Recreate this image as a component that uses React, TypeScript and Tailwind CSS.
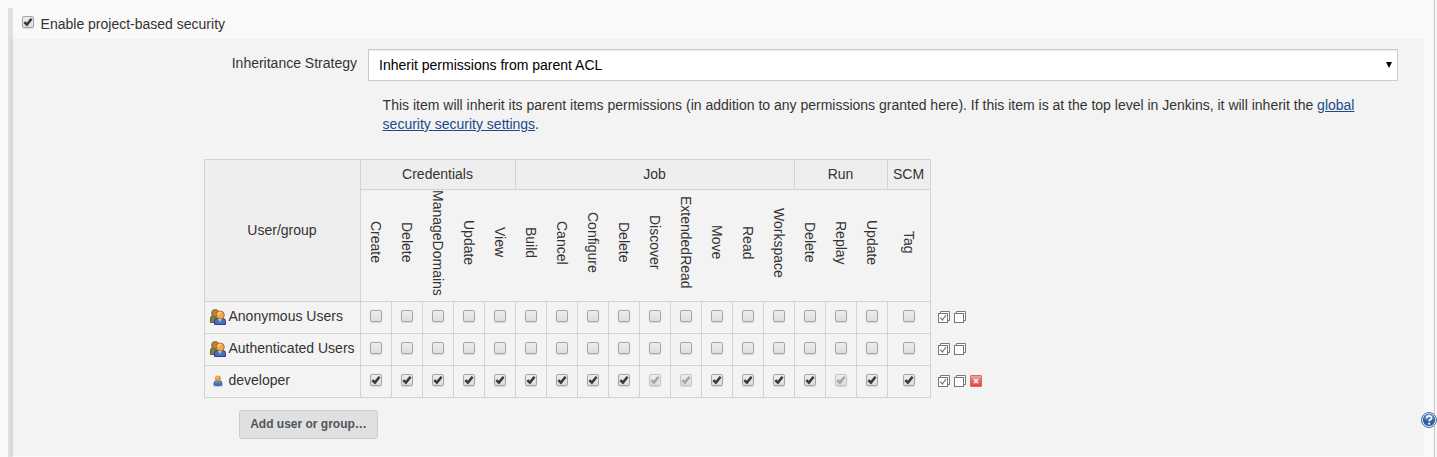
import React from "react";

type Group = { name: string; perms: string[]; span: string };

const groups: Group[] = [
  { name: "Credentials", perms: ["Create", "Delete", "ManageDomains", "Update", "View"], span: "col-span-5" },
  {
    name: "Job",
    perms: ["Build", "Cancel", "Configure", "Delete", "Discover", "ExtendedRead", "Move", "Read", "Workspace"],
    span: "col-span-9",
  },
  { name: "Run", perms: ["Delete", "Replay", "Update"], span: "col-span-3" },
  { name: "SCM", perms: ["Tag"], span: "col-span-1" },
];

const perms = groups.flatMap((g) => g.perms.map((p) => ({ group: g.name, name: p })));

const implied = ["Job/Discover", "Job/ExtendedRead", "Run/Replay"];

const users = [
  { name: "Anonymous Users", group: true, granted: false },
  { name: "Authenticated Users", group: true, granted: false },
  { name: "developer", group: false, granted: true },
];

function CheckBox({ checked = false, disabled = false }: { checked?: boolean; disabled?: boolean }) {
  return (
    <span
      role="checkbox"
      aria-checked={checked}
      aria-disabled={disabled}
      className={
        "block size-3 shrink-0 rounded-[2px] border bg-linear-to-b from-[#ededed] to-[#dedede] shadow-[0_1px_1px_rgba(0,0,0,0.12)] " +
        (disabled ? "border-[#c6c6c6]" : "border-[#a6a6a6]")
      }
    >
      {checked && (
        <svg viewBox="0 0 10 10" className="block size-2.5">
          <path
            d="M1.3 5.1 3.9 7.6 8.6 1.8"
            fill="none"
            stroke={disabled ? "#a4a4a4" : "#383838"}
            strokeWidth="2.5"
          />
        </svg>
      )}
    </span>
  );
}

function GroupIcon() {
  return (
    <svg viewBox="0 0 16 16" className="block size-4">
      <path d="M.5 13.5V9.2Q.5 6.5 4 6.5h3l2 2v5z" fill="#73853f" stroke="#3c4a24" strokeWidth=".8" />
      <circle cx="5.2" cy="4.1" r="3.6" fill="#bb8436" stroke="#80501d" strokeWidth=".8" />
      <path d="M4.5 15.5v-3.4q0-2.8 3.5-2.8h4q3.5 0 3.5 2.8v3.4z" fill="#3f72bd" stroke="#3b2b78" strokeWidth=".9" />
      <path d="m8 9.5 2 4 2-4z" fill="#dbe7f7" />
      <path d="m9.6 11 .4 3 .5-3z" fill="#4b6fb0" />
      <circle cx="10.3" cy="6" r="4" fill="#f2a850" stroke="#bd621b" strokeWidth=".9" />
      <path d="M7.8 5.4q1-2.3 3.2-1.8" fill="none" stroke="#ffd699" strokeWidth="1.3" />
    </svg>
  );
}

function UserIcon() {
  return (
    <svg viewBox="0 0 16 16" className="block size-4">
      <ellipse cx="8" cy="13.3" rx="5" ry="1" fill="#d4d4d4" />
      <path d="M3.5 12.6v-1.6Q3.5 7.6 6 7.6h4q2.4 0 2.4 3.4v1.6q-4.4 1.4-8.9 0z" fill="#3d70b2" />
      <path d="M4.7 9.8Q5 8.6 6.3 8.5l1.5 2.4 1.8-2.5q1.2.1 1.7 1.4" fill="#86abd7" />
      <circle cx="7.9" cy="5.5" r="2.9" fill="#d99334" />
      <circle cx="7.5" cy="4.7" r="1.6" fill="#efb562" />
    </svg>
  );
}

function StackIcon({ checked = false }: { checked?: boolean }) {
  return (
    <svg viewBox="0 0 12 12" className="block size-3">
      <path d="M2.5 2.5v-2h9v9h-2" fill="#fff" stroke="#777" />
      <rect x=".5" y="2.5" width="9" height="9" fill="#fff" stroke="#777" />
      {checked && <path d="M2.2 6.6 4.3 9 8 4.2" fill="none" stroke="#777" strokeWidth="1.2" />}
    </svg>
  );
}

function RemoveIcon() {
  return (
    <svg viewBox="0 0 12 12" className="block size-3">
      <defs>
        <linearGradient id="remove" x1="0" y1="0" x2="0" y2="1">
          <stop offset="0" stopColor="#efa6a2" />
          <stop offset=".55" stopColor="#dd6462" />
          <stop offset="1" stopColor="#db4240" />
        </linearGradient>
      </defs>
      <rect x=".5" y=".5" width="11" height="11" rx=".6" fill="url(#remove)" stroke="#d96a67" />
      <path d="m3.9 4 4.2 4.2m0-4.2L3.9 8.2" stroke="#fbecec" strokeWidth="1.7" />
    </svg>
  );
}

function HelpIcon() {
  return (
    <svg viewBox="0 0 16 16" className="block size-4">
      <circle cx="8" cy="8" r="7.5" fill="#fff" stroke="#3b68a6" />
      <circle cx="8" cy="8" r="6.2" fill="#31629f" />
      <path d="M2.6 7.2a5.4 5.4 0 0 1 10.8 0q-5 2-10.8 0z" fill="#5580b5" />
      <path d="M5.7 6.2q0-2.4 2.4-2.4t2.4 2.1q0 1.2-1.2 1.8-1.1.6-1.1 1.6" fill="none" stroke="#fff" strokeWidth="1.7" />
      <rect x="7.2" y="10.6" width="1.9" height="1.9" fill="#fff" />
    </svg>
  );
}

function Matrix() {
  return (
    <div className="ml-[191px] mt-[25px] flex items-end">
      <div className="grid grid-cols-[156px_repeat(17,31px)_43px] grid-rows-[30px_112px_32px_32px_32px] border-r border-b border-[#d3d4cf]">
        <div className="row-span-2 flex items-center justify-center border-t border-l border-[#d3d4cf] bg-[#eee] pr-px pb-0.5">
          User/group
        </div>
        {groups.map((g) => (
          <div
            key={g.name}
            className={"flex items-center justify-center border-t border-l border-[#d3d4cf] bg-[#eee] pr-px pb-0.5 " + g.span}
          >
            {g.name}
          </div>
        ))}
        {perms.map((p, i) => (
          <div
            key={p.group + p.name}
            className={
              "flex items-center justify-center border-t border-[#d3d4cf] pb-[6px] " + (i === 0 ? "border-l" : "pl-px")
            }
          >
            <span className="leading-4 whitespace-nowrap [writing-mode:vertical-rl]">{p.name}</span>
          </div>
        ))}
        {users.map((u) => (
          <React.Fragment key={u.name}>
            <div className="flex items-start border-t border-l border-[#d3d4cf] pt-1.5 pl-[5px]">
              <div className="pt-px">{u.group ? <GroupIcon /> : <UserIcon />}</div>
              <span className="ml-[2.5px] leading-4 whitespace-nowrap">{u.name}</span>
            </div>
            {perms.map((p) => (
              <div
                key={p.group + p.name}
                className="flex items-start justify-center border-t border-l border-[#d3d4cf] pt-2"
              >
                <CheckBox checked={u.granted} disabled={u.granted && implied.includes(p.group + "/" + p.name)} />
              </div>
            ))}
          </React.Fragment>
        ))}
      </div>
      <div className="ml-[7px] flex flex-col">
        {users.map((u) => (
          <div key={u.name} className="flex h-8 gap-1 pt-[9px]">
            <StackIcon checked />
            <StackIcon />
            {!u.group && <RemoveIcon />}
          </div>
        ))}
      </div>
    </div>
  );
}

export default function App() {
  return (
    <div className="relative h-[457px] w-[1437px] overflow-hidden bg-[#f9f9f9] font-['Liberation_Sans',Arial,sans-serif] text-sm text-[#333]">
      <div className="h-full w-[1435px] border-r border-[#c8c8c8] pt-2 pl-2">
        <div className="flex h-[31px] border-l-5 border-[#e0e0e0] pl-[9px]">
          <div className="pt-2">
            <CheckBox checked />
          </div>
          <span className="ml-[6.6px] pt-2 leading-4">Enable project-based security</span>
        </div>
        <div className="flex h-[417px] w-[1416px]">
          <div className="w-0.5 bg-[#e0e0e0]" />
          <div className="w-[3px] bg-[#d9d9d9]" />
          <div className="flex-1 bg-[#f3f3f3] pt-2.5">
            <div className="flex">
              <div className="w-[344px] pt-1.5 text-right leading-4">Inheritance Strategy</div>
              <div className="ml-[11px] flex h-8 w-[1030px] items-center justify-between border border-[#ccc] bg-white pr-[5px] pl-2.5 text-black shadow-[inset_0_1px_1px_rgba(0,0,0,0.075)]">
                <span>Inherit permissions from parent ACL</span>
                <svg viewBox="0 0 6 6" className="block h-1.5 w-1.5">
                  <path d="M0 0h6L3 6z" fill="#000" />
                </svg>
              </div>
            </div>
            <p className="mt-[15px] ml-[369.6px] w-[1000px] leading-[19px]">
              This item will inherit its parent items permissions (in addition to any permissions granted here). If this
              item is at the top level in Jenkins, it will inherit the{" "}
              <a href="#" className="text-[#204a87] underline">
                global
                <br />
                security security settings
              </a>
              .
            </p>
            <Matrix />
            <button className="mt-3 ml-[226px] block h-[29px] w-[139px] rounded-[3px] border border-[#ccc] bg-[#e0e0e0] pb-0.5 text-xs font-bold text-[#4d545d]">
              Add user or group…
            </button>
          </div>
        </div>
        <div className="h-px w-[1416px]">
          <div className="h-full w-[5px] bg-[#e0e0e0]" />
        </div>
      </div>
      <div className="absolute top-[412px] left-[1421px]">
        <HelpIcon />
      </div>
    </div>
  );
}
